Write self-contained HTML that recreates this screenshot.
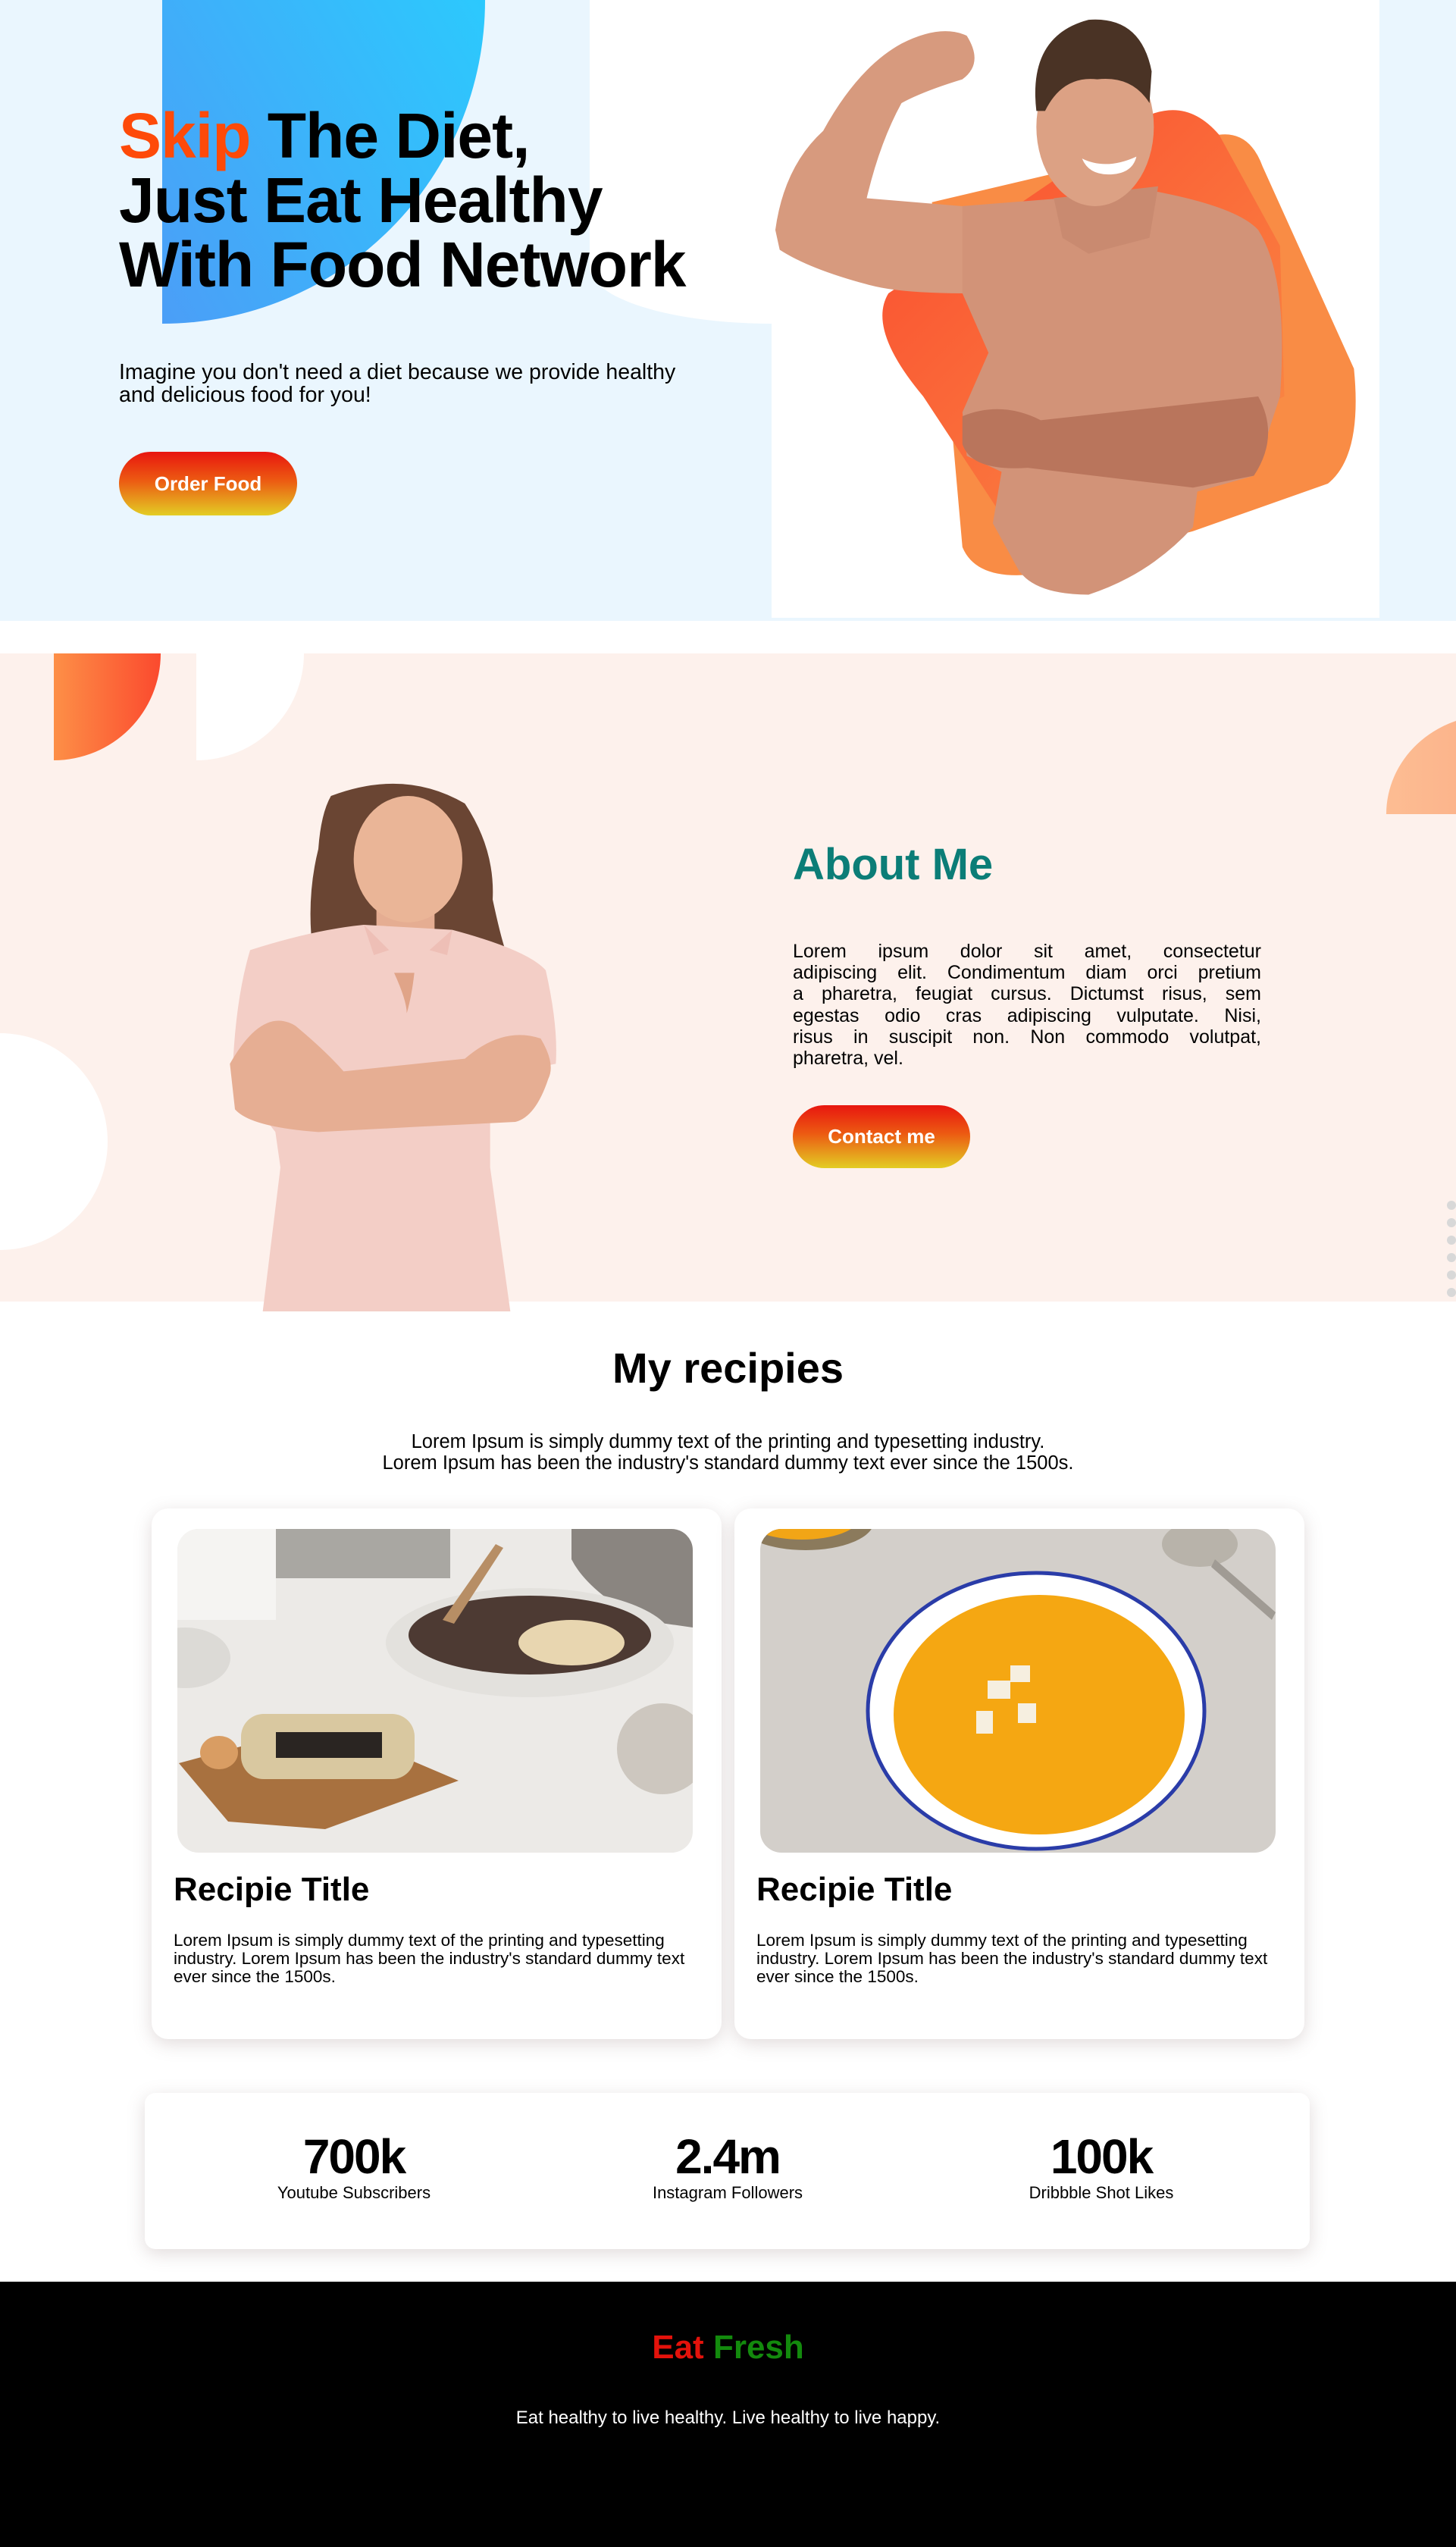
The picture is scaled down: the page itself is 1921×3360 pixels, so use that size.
<!DOCTYPE html>
<html><head><meta charset="utf-8">
<style>
*{margin:0;padding:0;box-sizing:border-box}
html,body{width:1921px;height:3360px;overflow:hidden;background:#fff;font-family:"Liberation Sans",sans-serif;color:#000}
.abs{position:absolute}
.btn{position:absolute;border-radius:42px;background:linear-gradient(180deg,#e8160f 0%,#ec5a12 45%,#e3cd24 100%);color:#fff;font-weight:bold;font-size:26px;display:flex;align-items:center;justify-content:center}
.jl{text-align:justify;text-align-last:justify;display:block;white-space:nowrap}
.card{position:absolute;background:#fff;border-radius:22px;box-shadow:0 6px 24px rgba(120,90,90,.22)}
</style></head><body>

<!-- HERO -->
<div class="abs" style="left:0;top:0;width:1921px;height:819px;background:#eaf6fe"></div>
<div class="abs" style="left:214px;top:0;width:426px;height:427px;background:linear-gradient(60deg,#4b9ef7,#2cc9fd);border-bottom-right-radius:100% 100%"></div>
<div class="abs" style="left:778px;top:0;width:240px;height:427px;background:#fff;border-bottom-left-radius:240px 75px"></div>
<div class="abs" style="left:1018px;top:0;width:802px;height:815px;background:#fff"></div>

<svg class="abs" style="left:1000px;top:0" width="900" height="820" viewBox="0 0 1568 1568" preserveAspectRatio="none">
 <defs>
  <linearGradient id="og" x1="0" y1="0" x2="1" y2="1"><stop offset="0" stop-color="#fb4a2e"/><stop offset="1" stop-color="#f98c45"/></linearGradient>
 </defs>
 <path d="M400 510 L1060 340 Q1130 330 1160 420 L1370 930 Q1390 1150 1310 1220 L1000 1340 L620 1450 Q500 1460 470 1380 Z" fill="#f98c45"/>
 <path d="M300 740 L900 290 Q990 250 1060 340 L1200 620 L1210 1000 L560 1300 L380 1000 Q250 830 300 740 Z" fill="url(#og)"/>
 <path d="M40 580 Q60 420 150 330 Q230 170 330 110 Q420 60 480 90 Q520 160 470 200 Q380 230 330 260 Q280 360 250 500 L470 520 L480 740 Q330 740 260 720 Q120 680 50 630 Z" fill="#d79a7e"/>
 <path d="M470 520 L700 500 L760 480 L900 480 Q1100 520 1150 580 Q1220 700 1200 1000 L1140 1200 L1010 1240 L1000 1330 Q900 1450 760 1500 Q640 1500 600 1440 L540 1320 L560 1190 L480 1150 L470 1040 L530 890 L470 740 Z" fill="#d29378"/>
 <path d="M470 1050 Q560 1010 650 1060 L1150 1000 Q1200 1100 1140 1200 L1000 1230 L620 1180 Q490 1190 470 1120 Z" fill="#b9755c"/>
 <path d="M680 500 L700 600 L760 640 L900 600 L920 470 Z" fill="#c98a70"/>
 <ellipse cx="775" cy="320" rx="135" ry="200" fill="#dca184"/>
 <path d="M640 280 Q620 90 760 50 Q880 40 905 180 L900 260 Q860 190 780 200 Q700 190 660 280 Z" fill="#4a3325"/>
 <path d="M745 400 Q800 430 870 395 Q860 440 805 440 Q760 440 745 400 Z" fill="#fff"/>
</svg>

<div class="abs" style="left:157px;top:137px;font-size:84px;line-height:85px;font-weight:bold;white-space:nowrap;letter-spacing:-1px">
 <span style="color:#fe4a09">Skip</span> The Diet,<br>Just Eat Healthy<br>With Food Network
</div>
<div class="abs" style="left:157px;top:476px;font-size:28.5px;line-height:30px;white-space:nowrap">Imagine you don't need a diet because we provide healthy<br>and delicious food for you!</div>
<div class="btn" style="left:157px;top:596px;width:235px;height:84px">Order Food</div>

<!-- ABOUT -->
<div class="abs" style="left:0;top:862px;width:1921px;height:855px;background:#fdf1ec;overflow:hidden">
 <div class="abs" style="left:71px;top:0;width:141px;height:141px;background:linear-gradient(90deg,#fd8f47,#fb4a2e);border-bottom-right-radius:100%"></div>
 <div class="abs" style="left:259px;top:0;width:142px;height:141px;background:#fff;border-bottom-right-radius:100%"></div>
 <div class="abs" style="left:1829px;top:81px;width:140px;height:131px;background:linear-gradient(90deg,#fdbd93,#fbb088);border-top-left-radius:100%"></div>
 <div class="abs" style="left:-142px;top:501px;width:284px;height:286px;border-radius:50%;background:#fff"></div>
 <div class="abs" style="left:1909px;top:722px;width:12px;height:12px;border-radius:50%;background:#d8d8d8"></div>
 <div class="abs" style="left:1909px;top:745px;width:12px;height:12px;border-radius:50%;background:#d8d8d8"></div>
 <div class="abs" style="left:1909px;top:768px;width:12px;height:12px;border-radius:50%;background:#d8d8d8"></div>
 <div class="abs" style="left:1909px;top:791px;width:12px;height:12px;border-radius:50%;background:#d8d8d8"></div>
 <div class="abs" style="left:1909px;top:814px;width:12px;height:12px;border-radius:50%;background:#d8d8d8"></div>
 <div class="abs" style="left:1909px;top:837px;width:12px;height:12px;border-radius:50%;background:#d8d8d8"></div>
</div>
<svg class="abs" style="left:280px;top:1020px" width="480" height="710" viewBox="0 0 1440 2130" preserveAspectRatio="none">
 <path d="M470 90 Q760 -20 1000 120 Q1120 300 1110 500 Q1140 640 1160 700 L400 720 Q370 500 420 300 Q430 160 470 90 Z" fill="#6a4533"/>
 <rect x="650" y="480" width="230" height="220" fill="#e5ad92"/>
 <ellipse cx="775" cy="340" rx="215" ry="250" fill="#eab597"/>
 <path d="M150 700 Q400 620 600 600 L950 620 Q1250 700 1320 780 Q1370 1000 1360 1150 L1100 1200 L1100 1560 L1180 2130 L200 2130 L270 1560 L250 1420 L80 1200 Q90 900 150 700 Z" fill="#f3cec6"/>
 <path d="M600 600 L700 700 L640 720 Z M950 620 L860 700 L930 720 Z" fill="#eebfb6"/>
 <path d="M720 790 Q770 900 770 950 Q790 880 800 790 Z" fill="#e0a488"/>
 <path d="M70 1150 Q200 920 330 1000 Q450 1100 520 1180 L1000 1130 Q1150 1000 1300 1050 Q1360 1150 1330 1210 Q1280 1360 1200 1380 L800 1400 L420 1420 Q150 1400 90 1330 Z" fill="#e6ae93"/>
</svg>
<div class="abs" style="left:1046px;top:1107px;font-size:58px;font-weight:bold;color:#0b7d77;white-space:nowrap">About Me</div>
<div class="abs" style="left:1046px;top:1241px;width:618px;font-size:25px;line-height:28.2px">
 <span class="jl">Lorem ipsum dolor sit amet, consectetur</span>
 <span class="jl">adipiscing elit. Condimentum diam orci pretium</span>
 <span class="jl">a pharetra, feugiat cursus. Dictumst risus, sem</span>
 <span class="jl">egestas odio cras adipiscing vulputate. Nisi,</span>
 <span class="jl">risus in suscipit non. Non commodo volutpat,</span>
 <span style="display:block">pharetra, vel.</span>
</div>
<div class="btn" style="left:1046px;top:1458px;width:234px;height:83px">Contact me</div>

<!-- RECIPES -->
<div class="abs" style="left:0;top:1772px;width:1921px;text-align:center;font-size:56px;font-weight:bold">My recipies</div>
<div class="abs" style="left:0;top:1888px;width:1921px;text-align:center;font-size:25.5px;line-height:28px">Lorem Ipsum is simply dummy text of the printing and typesetting industry.<br>Lorem Ipsum has been the industry's standard dummy text ever since the 1500s.</div>

<div class="card" style="left:200px;top:1990px;width:752px;height:700px"></div>
<div class="card" style="left:969px;top:1990px;width:752px;height:700px"></div>

<svg class="abs" style="left:234px;top:2017px" width="680" height="427" viewBox="0 0 680 427">
 <defs><clipPath id="c1"><rect width="680" height="427" rx="28"/></clipPath></defs>
 <g clip-path="url(#c1)">
  <rect width="680" height="427" fill="#eceae7"/>
  <rect x="40" y="0" width="320" height="65" fill="#a9a7a2"/>
  <rect x="0" y="0" width="130" height="120" fill="#f5f4f2"/>
  <path d="M520 0 L680 0 L680 130 L610 120 Q540 80 520 40 Z" fill="#8a8580"/>
  <ellipse cx="10" cy="170" rx="60" ry="40" fill="#dcdad6"/>
  <ellipse cx="465" cy="150" rx="190" ry="72" fill="#e3e1dd"/>
  <ellipse cx="465" cy="140" rx="160" ry="52" fill="#4d3a33"/>
  <ellipse cx="520" cy="150" rx="70" ry="30" fill="#e8d6b0"/>
  <path d="M350 120 L420 20 L430 25 L365 125 Z" fill="#b78e65"/>
  <path d="M2 309 L195 257 L371 332 L195 396 L67 386 Z" fill="#a8713f"/>
  <ellipse cx="55" cy="295" rx="25" ry="22" fill="#d99d63"/>
  <ellipse cx="120" cy="270" rx="28" ry="22" fill="#e2a86c"/>
  <rect x="84" y="244" width="229" height="86" rx="30" fill="#d9c8a0"/>
  <rect x="130" y="268" width="140" height="34" fill="#2a2522"/>
  <ellipse cx="640" cy="290" rx="60" ry="60" fill="#cdc7bf"/>
 </g>
</svg>
<svg class="abs" style="left:1003px;top:2017px" width="680" height="427" viewBox="0 0 680 427">
 <defs><clipPath id="c2"><rect width="680" height="427" rx="28"/></clipPath></defs>
 <g clip-path="url(#c2)">
  <rect width="680" height="427" fill="#d3cfca"/>
  <ellipse cx="60" cy="-10" rx="90" ry="38" fill="#8b7a5c"/>
  <ellipse cx="55" cy="-14" rx="75" ry="28" fill="#f2a516"/>
  <ellipse cx="580" cy="20" rx="50" ry="30" fill="#b8b3aa"/>
  <path d="M600 40 L680 110 L675 120 L595 50 Z" fill="#a09b94"/>
  <ellipse cx="364" cy="240" rx="222" ry="182" fill="#fff" stroke="#2a3ca8" stroke-width="5"/>
  <ellipse cx="368" cy="245" rx="192" ry="158" fill="#f5a712"/>
  <rect x="300" y="200" width="30" height="24" fill="#f6efe0"/>
  <rect x="330" y="180" width="26" height="22" fill="#f6efe0"/>
  <rect x="285" y="240" width="22" height="30" fill="#f6efe0"/>
  <rect x="340" y="230" width="24" height="26" fill="#f6efe0"/>
 </g>
</svg>

<div class="abs" style="left:229px;top:2468px;font-size:44px;font-weight:bold;white-space:nowrap">Recipie Title</div>
<div class="abs" style="left:998px;top:2468px;font-size:44px;font-weight:bold;white-space:nowrap">Recipie Title</div>
<div class="abs" style="left:229px;top:2548px;font-size:22.5px;line-height:24px;white-space:nowrap">Lorem Ipsum is simply dummy text of the printing and typesetting<br>industry. Lorem Ipsum has been the industry's standard dummy text<br>ever since the 1500s.</div>
<div class="abs" style="left:998px;top:2548px;font-size:22.5px;line-height:24px;white-space:nowrap">Lorem Ipsum is simply dummy text of the printing and typesetting<br>industry. Lorem Ipsum has been the industry's standard dummy text<br>ever since the 1500s.</div>

<!-- STATS -->
<div class="card" style="left:191px;top:2761px;width:1537px;height:206px;border-radius:14px"></div>
<div class="abs" style="left:267px;top:2810px;width:400px;text-align:center">
 <div style="font-size:64px;font-weight:bold;line-height:70px;letter-spacing:-2px">700k</div>
 <div style="font-size:22px;line-height:26px">Youtube Subscribers</div>
</div>
<div class="abs" style="left:760px;top:2810px;width:400px;text-align:center">
 <div style="font-size:64px;font-weight:bold;line-height:70px;letter-spacing:-2px">2.4m</div>
 <div style="font-size:22px;line-height:26px">Instagram Followers</div>
</div>
<div class="abs" style="left:1253px;top:2810px;width:400px;text-align:center">
 <div style="font-size:64px;font-weight:bold;line-height:70px;letter-spacing:-2px">100k</div>
 <div style="font-size:22px;line-height:26px">Dribbble Shot Likes</div>
</div>

<!-- FOOTER -->
<div class="abs" style="left:0;top:3010px;width:1921px;height:350px;background:#000"></div>
<div class="abs" style="left:0;top:3072px;width:1921px;text-align:center;font-size:44px;font-weight:bold"><span style="color:#e3120b">Eat</span> <span style="color:#138a0d">Fresh</span></div>
<div class="abs" style="left:0;top:3176px;width:1921px;text-align:center;font-size:24px;color:#fff">Eat healthy to live healthy. Live healthy to live happy.</div>

</body></html>
